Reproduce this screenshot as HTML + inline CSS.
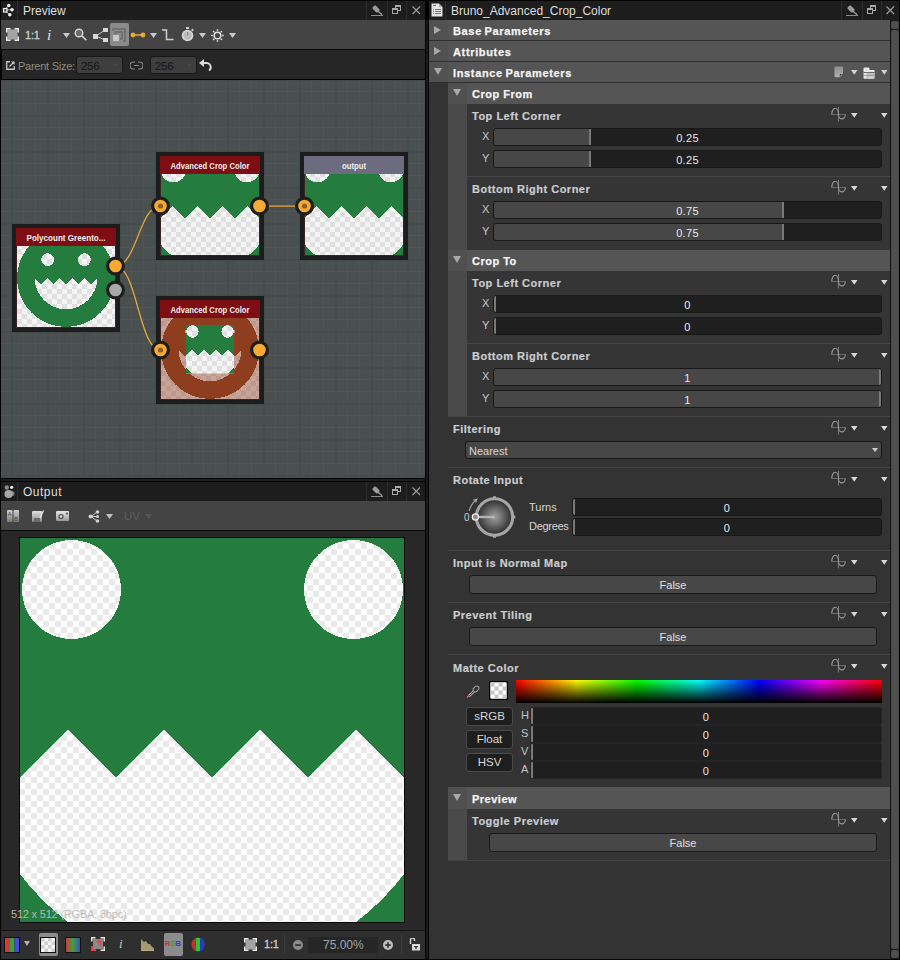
<!DOCTYPE html>
<html><head><meta charset="utf-8"><style>
*{margin:0;padding:0;box-sizing:border-box}
html,body{width:900px;height:960px;overflow:hidden;background:#030303;font-family:"Liberation Sans",sans-serif}
.a{position:absolute}
.t{position:absolute;white-space:nowrap;line-height:1}
.sep{position:absolute;width:1px;background:#2c2c2c}
.bt{position:absolute;white-space:nowrap;line-height:1;font-weight:bold;font-size:11px;letter-spacing:0.5px;color:#f4f4f4;-webkit-text-stroke:0.25px #f4f4f4}
.lt{position:absolute;white-space:nowrap;line-height:1;font-weight:bold;font-size:11px;letter-spacing:0.5px;color:#c9ccd0;-webkit-text-stroke:0.2px #c9ccd0}
.sl{position:absolute;height:17px;border:1px solid #181818;border-radius:3px;background:#1f1f1f;overflow:hidden}
.sl .f{position:absolute;left:0;top:0;bottom:0;background:#474747}
.sl .k{position:absolute;top:0;bottom:0;width:2px;background:#7a7a7a}
.sl .v{position:absolute;left:0;right:0;top:4px;letter-spacing:0.3px;text-align:center;font-size:11px;color:#e8e8e8;line-height:1;white-space:nowrap}
.btn{position:absolute;height:18px;border:1px solid #1a1a1a;border-radius:3px;background:#474747}
.btn .v{position:absolute;left:0;right:0;top:3px;text-align:center;font-size:11px;color:#e0e0e0;line-height:1}
.lbl{position:absolute;font-size:11px;color:#d4d4d4;line-height:1;white-space:nowrap}
</style></head><body>
<div class="a" style="left:1px;top:1px;width:424px;height:19px;background:#1d1d1d"></div>
<div class="sep" style="left:17px;top:1px;height:19px;background:#2e2e2e"></div>
<svg class="a" style="left:0px;top:0px" width="16" height="18" viewBox="0 0 16 18"><path d="M5,9 L9,5.5 M5,10 L12,9.7 M5,11 L10,14.8" stroke="#cfcfcf" stroke-width="0.8"/><rect x="3.5" y="8.5" width="3.5" height="3.5" fill="#555" stroke="#f0f0f0" stroke-width="1.2"/><circle cx="8.8" cy="5.5" r="1.7" fill="#f0f0f0"/><circle cx="12" cy="9.7" r="1.8" fill="#f0f0f0"/><circle cx="9.8" cy="14.8" r="1.8" fill="#f0f0f0"/></svg>
<div class="t" style="left:23px;top:5px;font-size:12px;color:#dedede">Preview</div>
<div class="sep" style="left:366px;top:1px;height:19px"></div>
<div class="sep" style="left:387px;top:1px;height:19px"></div>
<div class="sep" style="left:406px;top:1px;height:19px"></div>
<svg class="a" style="left:371px;top:5px" width="12" height="11" viewBox="0 0 12 11"><g transform="rotate(45 5 4)"><rect x="1.5" y="1.8" width="7" height="4.4" rx="1.2" fill="#9c9c9c"/></g><path d="M5.5,5 L11.2,9.8" stroke="#9c9c9c" stroke-width="1.3"/><rect x="0" y="10" width="12" height="1" fill="#8a8a8a"/></svg><svg class="a" style="left:392px;top:5px" width="9" height="9" viewBox="0 0 9 9"><rect x="3.5" y="0.5" width="5" height="5" fill="none" stroke="#a8a8a8" stroke-width="1"/><rect x="3" y="0" width="6" height="2" fill="#a8a8a8"/><rect x="0.5" y="3.5" width="5" height="5" fill="#1e1e1e" stroke="#a8a8a8" stroke-width="1"/><rect x="0" y="3" width="6" height="2" fill="#a8a8a8"/></svg><svg class="a" style="left:412px;top:6px" width="9" height="9" viewBox="0 0 9 9"><path d="M0.5,0.5 L8,8 M8,0.5 L0.5,8" stroke="#a0a0a0" stroke-width="1.1"/></svg>
<div class="a" style="left:1px;top:20px;width:424px;height:29px;background:#444444"></div>
<div class="a" style="left:1px;top:49px;width:424px;height:1px;background:#0a0a0a"></div>
<div class="a" style="left:2px;top:50px;width:423px;height:29px;background:#262626"></div>
<div class="a" style="left:1px;top:79px;width:424px;height:1px;background:#030303"></div>
<svg class="a" style="left:1px;top:80px" width="424" height="398" viewBox="1 80 424 398">
<defs>
 <pattern id="grid" patternUnits="userSpaceOnUse" x="11" y="7" width="36" height="36">
  <rect x="0" y="0" width="36" height="36" fill="#4a5050"/>
  <rect x="12" y="0" width="1" height="36" fill="#4f5555"/>
  <rect x="24" y="0" width="1" height="36" fill="#4f5555"/>
  <rect x="0" y="12" width="36" height="1" fill="#4f5555"/>
  <rect x="0" y="24" width="36" height="1" fill="#4f5555"/>
  <rect x="0" y="0" width="2" height="36" fill="#464c4c"/>
  <rect x="0" y="0" width="36" height="2" fill="#464c4c"/>
 </pattern>
 <pattern id="chk" patternUnits="userSpaceOnUse" x="1" y="1" width="10" height="10">
  <rect width="10" height="10" fill="#f4f4f4"/>
  <rect width="5" height="5" fill="#e0e0e0"/>
  <rect x="5" y="5" width="5" height="5" fill="#e0e0e0"/>
 </pattern>
 <path id="smiley" d="M6,256 A250,250 0 1 0 506,256 A250,250 0 1 0 6,256 Z M129.33,162.33 A33,33 0 1 0 195.33,162.33 A33,33 0 1 0 129.33,162.33 Z M317.33,162.33 A33,33 0 1 0 383.33,162.33 A33,33 0 1 0 317.33,162.33 Z M96,256 L128,287.4 L160,256 L192,287.4 L224,256 L256,287.4 L288,256 L320,287.4 L352,256 L384,287.4 L416,256 A160,160 0 0 1 96,256 Z" fill-rule="evenodd" shape-rendering="crispEdges"/>
 <clipPath id="c512"><rect width="512" height="512"/></clipPath>
 <clipPath id="c100"><rect width="100" height="100"/></clipPath>
</defs><rect x="1" y="80" width="424" height="398" fill="url(#grid)"/><g fill="none" stroke="#e8a53c" stroke-width="1.25"><path d="M115.5,266 C137,266 139,206 160.5,206"/><path d="M115.5,266 C137,266 139,350 160.5,350"/><path d="M259.5,206 L304.5,206"/></g><g transform="translate(12,224)"><rect x="0" y="0" width="108" height="108" fill="#1c1c1c"/><g transform="translate(4,4)" clip-path="url(#c100)"><rect width="100" height="100" fill="url(#chk)"/><use href="#smiley" transform="scale(0.1953125)" fill="#247d3e"/></g><rect x="4.5" y="4.5" width="99" height="99" fill="none" stroke="#3c2424"/><rect x="4" y="4" width="100" height="18" fill="#7e0e13"/><text x="54" y="16.5" text-anchor="middle" font-family="Liberation Sans" font-weight="bold" font-size="8.3" fill="#f0f0f0" textLength="79" lengthAdjust="spacingAndGlyphs">Polycount Greento...</text></g><g transform="translate(156,152)"><rect x="0" y="0" width="108" height="108" fill="#1c1c1c"/><g transform="translate(4,4)" clip-path="url(#c100)"><rect width="100" height="100" fill="url(#chk)"/><g transform="scale(0.1953125)" clip-path="url(#c512)"><use href="#smiley" transform="scale(2) translate(-128,-128)" fill="#247d3e"/></g></g><rect x="4.5" y="4.5" width="99" height="99" fill="none" stroke="#3c2424"/><rect x="4" y="4" width="100" height="18" fill="#7e0e13"/><text x="54" y="16.5" text-anchor="middle" font-family="Liberation Sans" font-weight="bold" font-size="8.3" fill="#f0f0f0" textLength="79" lengthAdjust="spacingAndGlyphs">Advanced Crop Color</text></g><g transform="translate(300,152)"><rect x="0" y="0" width="108" height="108" fill="#1c1c1c"/><g transform="translate(4,4)" clip-path="url(#c100)"><rect width="100" height="100" fill="url(#chk)"/><g transform="scale(0.1953125)" clip-path="url(#c512)"><use href="#smiley" transform="scale(2) translate(-128,-128)" fill="#247d3e"/></g></g><rect x="4.5" y="4.5" width="99" height="99" fill="none" stroke="#3c2424"/><rect x="4" y="4" width="100" height="18" fill="#6d6b7f"/><text x="54" y="16.5" text-anchor="middle" font-family="Liberation Sans" font-weight="bold" font-size="8.3" fill="#f0f0f0" textLength="24" lengthAdjust="spacingAndGlyphs">output</text></g><g transform="translate(156,296)"><rect x="0" y="0" width="108" height="108" fill="#1c1c1c"/><g transform="translate(4,4)" clip-path="url(#c100)"><rect width="100" height="100" fill="url(#chk)"/><rect width="100" height="100" fill="#8e3d1e" opacity="0.43"/><use href="#smiley" transform="scale(0.1953125)" fill="#8e3d1e"/><g transform="translate(26,25)"><rect width="48" height="48.5" fill="url(#chk)"/><g transform="scale(1,1.01)"><g transform="scale(0.09375)" clip-path="url(#c512)"><use href="#smiley" transform="scale(2) translate(-128,-128)" fill="#247d3e"/></g></g></g></g><rect x="4.5" y="4.5" width="99" height="99" fill="none" stroke="#3c2424"/><rect x="4" y="4" width="100" height="18" fill="#7e0e13"/><text x="54" y="16.5" text-anchor="middle" font-family="Liberation Sans" font-weight="bold" font-size="8.3" fill="#f0f0f0" textLength="79" lengthAdjust="spacingAndGlyphs">Advanced Crop Color</text></g><circle cx="115.5" cy="266" r="7.9" fill="#f6a935" stroke="#1e1e1e" stroke-width="3.2"/><circle cx="115.5" cy="290" r="7.9" fill="#a9a9a9" stroke="#1e1e1e" stroke-width="3.2"/><circle cx="160.5" cy="206" r="7.9" fill="#f6a935" stroke="#1e1e1e" stroke-width="3.2"/><circle cx="160.5" cy="206" r="2.6" fill="#8c6224"/><circle cx="259.5" cy="206" r="7.9" fill="#f6a935" stroke="#1e1e1e" stroke-width="3.2"/><circle cx="304.5" cy="206" r="7.9" fill="#f6a935" stroke="#1e1e1e" stroke-width="3.2"/><circle cx="304.5" cy="206" r="2.6" fill="#8c6224"/><circle cx="160.5" cy="350" r="7.9" fill="#f6a935" stroke="#1e1e1e" stroke-width="3.2"/><circle cx="160.5" cy="350" r="2.6" fill="#8c6224"/><circle cx="259.5" cy="350" r="7.9" fill="#f6a935" stroke="#1e1e1e" stroke-width="3.2"/></svg>
<div class="a" style="left:1px;top:478px;width:424px;height:1px;background:#030303"></div>
<div class="a" style="left:1px;top:479px;width:424px;height:2px;background:#1e1e1e"></div>
<div class="a" style="left:1px;top:481px;width:424px;height:1px;background:#030303"></div>
<div class="a" style="left:1px;top:482px;width:424px;height:19px;background:#1d1d1d"></div>
<div class="sep" style="left:17px;top:482px;height:19px;background:#2e2e2e"></div>
<div class="t" style="left:23px;top:486px;font-size:12px;color:#dedede;letter-spacing:0.5px">Output</div>
<svg class="a" style="left:1px;top:482px" width="16" height="19" viewBox="0 0 16 19"><circle cx="5.8" cy="5.5" r="2.2" fill="#8a8a8a"/><circle cx="10.7" cy="5.3" r="1.6" fill="#e8e8e8"/><circle cx="11" cy="11.5" r="2.6" fill="#7a7a7a"/><circle cx="7.6" cy="12" r="4.1" fill="#a8a8a8"/></svg>
<div class="sep" style="left:366px;top:482px;height:19px"></div>
<div class="sep" style="left:387px;top:482px;height:19px"></div>
<div class="sep" style="left:406px;top:482px;height:19px"></div>
<svg class="a" style="left:371px;top:486px" width="12" height="11" viewBox="0 0 12 11"><g transform="rotate(45 5 4)"><rect x="1.5" y="1.8" width="7" height="4.4" rx="1.2" fill="#9c9c9c"/></g><path d="M5.5,5 L11.2,9.8" stroke="#9c9c9c" stroke-width="1.3"/><rect x="0" y="10" width="12" height="1" fill="#8a8a8a"/></svg><svg class="a" style="left:392px;top:486px" width="9" height="9" viewBox="0 0 9 9"><rect x="3.5" y="0.5" width="5" height="5" fill="none" stroke="#a8a8a8" stroke-width="1"/><rect x="3" y="0" width="6" height="2" fill="#a8a8a8"/><rect x="0.5" y="3.5" width="5" height="5" fill="#1e1e1e" stroke="#a8a8a8" stroke-width="1"/><rect x="0" y="3" width="6" height="2" fill="#a8a8a8"/></svg><svg class="a" style="left:412px;top:487px" width="9" height="9" viewBox="0 0 9 9"><path d="M0.5,0.5 L8,8 M8,0.5 L0.5,8" stroke="#a0a0a0" stroke-width="1.1"/></svg>
<div class="a" style="left:1px;top:501px;width:424px;height:29px;background:#444444"></div>
<div class="a" style="left:1px;top:530px;width:424px;height:1px;background:#0a0a0a"></div>
<div class="a" style="left:1px;top:531px;width:424px;height:399px;background:#282828"></div>
<div class="a" style="left:1px;top:930px;width:424px;height:1px;background:#141414"></div>
<div class="a" style="left:1px;top:931px;width:424px;height:28px;background:#2f2f2f"></div>
<svg class="a" style="left:19px;top:537px" width="386" height="386" viewBox="-1 -1 386 386"><defs><pattern id="chk6" patternUnits="userSpaceOnUse" x="-1" y="-1" width="12" height="12"><rect width="12" height="12" fill="#ffffff"/><rect width="6" height="6" fill="#e9e9e9"/><rect x="6" y="6" width="6" height="6" fill="#e9e9e9"/></pattern></defs><rect x="-1" y="-1" width="386" height="386" fill="#0a0a0a"/><rect width="384" height="384" fill="url(#chk6)"/><g transform="scale(0.75)" clip-path="url(#c512)"><use href="#smiley" transform="scale(2) translate(-128,-128)" fill="#247d3e"/></g></svg>
<div class="t" style="left:11px;top:909px;font-size:11px;color:#aaa;letter-spacing:-0.2px"><span style="color:#b4b6ba">512 x 512</span> <span style="color:#bdbdbd">(RGBA, 8bpc)</span></div>
<div class="a" style="left:429px;top:1px;width:470px;height:19px;background:#1d1d1d"></div>
<div class="sep" style="left:445px;top:1px;height:19px;background:#2e2e2e"></div>
<div class="t" style="left:451px;top:5px;font-size:12px;color:#dedede">Bruno_Advanced_Crop_Color</div>
<div class="sep" style="left:841px;top:1px;height:19px"></div>
<div class="sep" style="left:862px;top:1px;height:19px"></div>
<div class="sep" style="left:881px;top:1px;height:19px"></div>
<svg class="a" style="left:846px;top:5px" width="12" height="11" viewBox="0 0 12 11"><g transform="rotate(45 5 4)"><rect x="1.5" y="1.8" width="7" height="4.4" rx="1.2" fill="#9c9c9c"/></g><path d="M5.5,5 L11.2,9.8" stroke="#9c9c9c" stroke-width="1.3"/><rect x="0" y="10" width="12" height="1" fill="#8a8a8a"/></svg><svg class="a" style="left:867px;top:5px" width="9" height="9" viewBox="0 0 9 9"><rect x="3.5" y="0.5" width="5" height="5" fill="none" stroke="#a8a8a8" stroke-width="1"/><rect x="3" y="0" width="6" height="2" fill="#a8a8a8"/><rect x="0.5" y="3.5" width="5" height="5" fill="#1e1e1e" stroke="#a8a8a8" stroke-width="1"/><rect x="0" y="3" width="6" height="2" fill="#a8a8a8"/></svg><svg class="a" style="left:886px;top:6px" width="9" height="9" viewBox="0 0 9 9"><path d="M0.5,0.5 L8,8 M8,0.5 L0.5,8" stroke="#a0a0a0" stroke-width="1.1"/></svg>
<div class="a" style="left:429px;top:20px;width:461px;height:939px;background:#333333"></div>
<div class="a" style="left:426px;top:20px;width:2px;height:939px;background:#191919"></div>
<div class="a" style="left:890px;top:20px;width:1px;height:939px;background:#141414"></div>
<div class="a" style="left:891px;top:20px;width:8px;height:939px;background:#1c1c1c"></div>
<div class="a" style="left:429px;top:20px;width:461px;height:20px;background:#555555"></div>
<div class="a" style="left:429px;top:20px;width:19px;height:20px;background:#515151"></div>
<div class="a" style="left:429px;top:40px;width:461px;height:1px;background:#2f2f2f"></div>
<svg class="a" style="left:434px;top:26px" width="7" height="8" viewBox="0 0 7 8"><path d="M0,0 L7,4.0 L0,8 Z" fill="#a8a8a8"/></svg>
<div class="bt" style="left:453px;top:26px;letter-spacing:0.65px;word-spacing:-1px">Base Parameters</div>
<div class="a" style="left:429px;top:41px;width:461px;height:20px;background:#555555"></div>
<div class="a" style="left:429px;top:41px;width:19px;height:20px;background:#515151"></div>
<div class="a" style="left:429px;top:61px;width:461px;height:1px;background:#2f2f2f"></div>
<svg class="a" style="left:434px;top:47px" width="7" height="8" viewBox="0 0 7 8"><path d="M0,0 L7,4.0 L0,8 Z" fill="#a8a8a8"/></svg>
<div class="bt" style="left:453px;top:47px;letter-spacing:0.65px;word-spacing:-1px">Attributes</div>
<div class="a" style="left:429px;top:62px;width:461px;height:20px;background:#555555"></div>
<div class="a" style="left:429px;top:62px;width:19px;height:20px;background:#515151"></div>
<div class="a" style="left:429px;top:82px;width:461px;height:1px;background:#2f2f2f"></div>
<svg class="a" style="left:434px;top:68px" width="8" height="7" viewBox="0 0 8 7"><path d="M0,0 L8,0 L4.0,7 Z" fill="#a8a8a8"/></svg>
<div class="bt" style="left:453px;top:68px;letter-spacing:0.65px;word-spacing:-1px">Instance Parameters</div>
<div class="a" style="left:448px;top:83px;width:442px;height:21px;background:#555555"></div>
<div class="a" style="left:448px;top:83px;width:19px;height:21px;background:#505050"></div>
<svg class="a" style="left:453px;top:89px" width="8" height="7" viewBox="0 0 8 7"><path d="M0,0 L8,0 L4.0,7 Z" fill="#a8a8a8"/></svg>
<div class="bt" style="left:472px;top:89px">Crop From</div>
<div class="a" style="left:448px;top:104px;width:19px;height:146px;background:#4a4a4a"></div>
<div class="a" style="left:467px;top:104px;width:423px;height:146px;background:#353535"></div>
<div class="lt" style="left:472px;top:111px">Top Left Corner</div>
<svg class="a" style="left:831px;top:107px" width="15" height="15" viewBox="0 0 15 15"><path d="M7.5,0 V14.5" stroke="#7c7c7c" stroke-width="1"/><path d="M0.5,7.5 H14.5" stroke="#6e6e6e" stroke-width="0.9"/><path d="M0.8,7.5 A3.35,6.3 0 0 1 7.5,7.5 A3.4,4.4 0 0 0 14.3,7.5" fill="none" stroke="#9a9a9a" stroke-width="1.1"/></svg>
<svg class="a" style="left:851px;top:113px" width="6.5" height="4.8" viewBox="0 0 6.5 4.8"><path d="M0,0 L6.5,0 L3.25,4.8 Z" fill="#d8d8d8"/></svg>
<svg class="a" style="left:881px;top:113px" width="6.5" height="4.8" viewBox="0 0 6.5 4.8"><path d="M0,0 L6.5,0 L3.25,4.8 Z" fill="#d8d8d8"/></svg>
<div class="lbl" style="left:482px;top:131px;color:#c8c8c8">X</div>
<div class="sl" style="left:493px;top:128px;width:389px;height:18px"><div class="f" style="width:97px"></div><div class="k" style="left:95px"></div><div class="v">0.25</div></div>
<div class="lbl" style="left:482px;top:153px;color:#c8c8c8">Y</div>
<div class="sl" style="left:493px;top:150px;width:389px;height:18px"><div class="f" style="width:97px"></div><div class="k" style="left:95px"></div><div class="v">0.25</div></div>
<div class="a" style="left:467px;top:176px;width:423px;height:1px;background:#454545"></div>
<div class="lt" style="left:472px;top:184px">Bottom Right Corner</div>
<svg class="a" style="left:831px;top:180px" width="15" height="15" viewBox="0 0 15 15"><path d="M7.5,0 V14.5" stroke="#7c7c7c" stroke-width="1"/><path d="M0.5,7.5 H14.5" stroke="#6e6e6e" stroke-width="0.9"/><path d="M0.8,7.5 A3.35,6.3 0 0 1 7.5,7.5 A3.4,4.4 0 0 0 14.3,7.5" fill="none" stroke="#9a9a9a" stroke-width="1.1"/></svg>
<svg class="a" style="left:851px;top:186px" width="6.5" height="4.8" viewBox="0 0 6.5 4.8"><path d="M0,0 L6.5,0 L3.25,4.8 Z" fill="#d8d8d8"/></svg>
<svg class="a" style="left:881px;top:186px" width="6.5" height="4.8" viewBox="0 0 6.5 4.8"><path d="M0,0 L6.5,0 L3.25,4.8 Z" fill="#d8d8d8"/></svg>
<div class="lbl" style="left:482px;top:204px;color:#c8c8c8">X</div>
<div class="sl" style="left:493px;top:201px;width:389px;height:18px"><div class="f" style="width:290px"></div><div class="k" style="left:288px"></div><div class="v">0.75</div></div>
<div class="lbl" style="left:482px;top:226px;color:#c8c8c8">Y</div>
<div class="sl" style="left:493px;top:223px;width:389px;height:18px"><div class="f" style="width:290px"></div><div class="k" style="left:288px"></div><div class="v">0.75</div></div>
<div class="a" style="left:448px;top:250px;width:442px;height:21px;background:#555555"></div>
<div class="a" style="left:448px;top:250px;width:19px;height:21px;background:#505050"></div>
<svg class="a" style="left:453px;top:256px" width="8" height="7" viewBox="0 0 8 7"><path d="M0,0 L8,0 L4.0,7 Z" fill="#a8a8a8"/></svg>
<div class="bt" style="left:472px;top:256px">Crop To</div>
<div class="a" style="left:448px;top:271px;width:19px;height:145px;background:#4a4a4a"></div>
<div class="a" style="left:467px;top:271px;width:423px;height:145px;background:#353535"></div>
<div class="lt" style="left:472px;top:278px">Top Left Corner</div>
<svg class="a" style="left:831px;top:274px" width="15" height="15" viewBox="0 0 15 15"><path d="M7.5,0 V14.5" stroke="#7c7c7c" stroke-width="1"/><path d="M0.5,7.5 H14.5" stroke="#6e6e6e" stroke-width="0.9"/><path d="M0.8,7.5 A3.35,6.3 0 0 1 7.5,7.5 A3.4,4.4 0 0 0 14.3,7.5" fill="none" stroke="#9a9a9a" stroke-width="1.1"/></svg>
<svg class="a" style="left:851px;top:280px" width="6.5" height="4.8" viewBox="0 0 6.5 4.8"><path d="M0,0 L6.5,0 L3.25,4.8 Z" fill="#d8d8d8"/></svg>
<svg class="a" style="left:881px;top:280px" width="6.5" height="4.8" viewBox="0 0 6.5 4.8"><path d="M0,0 L6.5,0 L3.25,4.8 Z" fill="#d8d8d8"/></svg>
<div class="lbl" style="left:482px;top:298px;color:#c8c8c8">X</div>
<div class="sl" style="left:493px;top:295px;width:389px;height:18px"><div class="k" style="left:0px"></div><div class="v">0</div></div>
<div class="lbl" style="left:482px;top:320px;color:#c8c8c8">Y</div>
<div class="sl" style="left:493px;top:317px;width:389px;height:18px"><div class="k" style="left:0px"></div><div class="v">0</div></div>
<div class="a" style="left:467px;top:343px;width:423px;height:1px;background:#454545"></div>
<div class="lt" style="left:472px;top:351px">Bottom Right Corner</div>
<svg class="a" style="left:831px;top:347px" width="15" height="15" viewBox="0 0 15 15"><path d="M7.5,0 V14.5" stroke="#7c7c7c" stroke-width="1"/><path d="M0.5,7.5 H14.5" stroke="#6e6e6e" stroke-width="0.9"/><path d="M0.8,7.5 A3.35,6.3 0 0 1 7.5,7.5 A3.4,4.4 0 0 0 14.3,7.5" fill="none" stroke="#9a9a9a" stroke-width="1.1"/></svg>
<svg class="a" style="left:851px;top:353px" width="6.5" height="4.8" viewBox="0 0 6.5 4.8"><path d="M0,0 L6.5,0 L3.25,4.8 Z" fill="#d8d8d8"/></svg>
<svg class="a" style="left:881px;top:353px" width="6.5" height="4.8" viewBox="0 0 6.5 4.8"><path d="M0,0 L6.5,0 L3.25,4.8 Z" fill="#d8d8d8"/></svg>
<div class="lbl" style="left:482px;top:371px;color:#c8c8c8">X</div>
<div class="sl" style="left:493px;top:368px;width:389px;height:18px"><div class="f" style="width:387px"></div><div class="k" style="left:385px"></div><div class="v">1</div></div>
<div class="lbl" style="left:482px;top:393px;color:#c8c8c8">Y</div>
<div class="sl" style="left:493px;top:390px;width:389px;height:18px"><div class="f" style="width:387px"></div><div class="k" style="left:385px"></div><div class="v">1</div></div>
<div class="a" style="left:448px;top:416px;width:442px;height:1px;background:#454545"></div>
<div class="lt" style="left:453px;top:424px">Filtering</div>
<svg class="a" style="left:831px;top:420px" width="15" height="15" viewBox="0 0 15 15"><path d="M7.5,0 V14.5" stroke="#7c7c7c" stroke-width="1"/><path d="M0.5,7.5 H14.5" stroke="#6e6e6e" stroke-width="0.9"/><path d="M0.8,7.5 A3.35,6.3 0 0 1 7.5,7.5 A3.4,4.4 0 0 0 14.3,7.5" fill="none" stroke="#9a9a9a" stroke-width="1.1"/></svg>
<svg class="a" style="left:851px;top:426px" width="6.5" height="4.8" viewBox="0 0 6.5 4.8"><path d="M0,0 L6.5,0 L3.25,4.8 Z" fill="#d8d8d8"/></svg>
<svg class="a" style="left:881px;top:426px" width="6.5" height="4.8" viewBox="0 0 6.5 4.8"><path d="M0,0 L6.5,0 L3.25,4.8 Z" fill="#d8d8d8"/></svg>
<div class="a" style="left:465px;top:441px;width:417px;height:18px;border:1px solid #181818;border-radius:3px;background:#474747"></div>
<div class="lbl" style="left:469px;top:446px;color:#dadada">Nearest</div>
<svg class="a" style="left:872px;top:448px" width="6" height="4" viewBox="0 0 6 4"><path d="M0,0 L6,0 L3.0,4 Z" fill="#d0d0d0"/></svg>
<div class="a" style="left:448px;top:467px;width:442px;height:1px;background:#454545"></div>
<div class="lt" style="left:453px;top:475px">Rotate Input</div>
<svg class="a" style="left:831px;top:471px" width="15" height="15" viewBox="0 0 15 15"><path d="M7.5,0 V14.5" stroke="#7c7c7c" stroke-width="1"/><path d="M0.5,7.5 H14.5" stroke="#6e6e6e" stroke-width="0.9"/><path d="M0.8,7.5 A3.35,6.3 0 0 1 7.5,7.5 A3.4,4.4 0 0 0 14.3,7.5" fill="none" stroke="#9a9a9a" stroke-width="1.1"/></svg>
<svg class="a" style="left:851px;top:477px" width="6.5" height="4.8" viewBox="0 0 6.5 4.8"><path d="M0,0 L6.5,0 L3.25,4.8 Z" fill="#d8d8d8"/></svg>
<svg class="a" style="left:881px;top:477px" width="6.5" height="4.8" viewBox="0 0 6.5 4.8"><path d="M0,0 L6.5,0 L3.25,4.8 Z" fill="#d8d8d8"/></svg>
<svg class="a" style="left:466px;top:493px" width="54" height="48" viewBox="0 0 54 48"><defs><radialGradient id="dg" cx="0.5" cy="0.5" r="0.5"><stop offset="0" stop-color="#a2a2a2"/><stop offset="1" stop-color="#323232"/></radialGradient></defs><circle cx="28.5" cy="24" r="17" fill="url(#dg)"/><circle cx="28.5" cy="24" r="18.2" fill="none" stroke="#a6a6a6" stroke-width="3.1"/><rect x="27" y="3.2" width="3" height="3" fill="#a6a6a6"/><rect x="27" y="41.8" width="3" height="3" fill="#a6a6a6"/><rect x="46.3" y="22.5" width="3" height="3" fill="#a6a6a6"/><path d="M9.4,24 H28.5" stroke="#b4b4b4" stroke-width="2.4"/><circle cx="9.4" cy="24" r="3.1" fill="#8c8c8c" stroke="#eeeeee" stroke-width="1.3"/><path d="M3.2,17.8 Q5,11 9.8,7.2" fill="none" stroke="#a0a0a0" stroke-width="1.2"/><path d="M11.8,5.2 L6.8,6.8 L10.2,10 Z" fill="#a0a0a0"/></svg>
<div class="lbl" style="left:464px;top:513px;color:#d0d0d0;font-size:10px">0</div>
<div class="lbl" style="left:529px;top:502px;color:#d6d6d6">Turns</div>
<div class="lbl" style="left:529px;top:521px;color:#d6d6d6;letter-spacing:-0.3px">Degrees</div>
<div class="sl" style="left:572px;top:498px;width:310px;height:18px"><div class="k" style="left:0px"></div><div class="v">0</div></div>
<div class="sl" style="left:572px;top:518px;width:310px;height:18px"><div class="k" style="left:0px"></div><div class="v">0</div></div>
<div class="a" style="left:448px;top:550px;width:442px;height:1px;background:#454545"></div>
<div class="lt" style="left:453px;top:558px">Input is Normal Map</div>
<svg class="a" style="left:831px;top:554px" width="15" height="15" viewBox="0 0 15 15"><path d="M7.5,0 V14.5" stroke="#7c7c7c" stroke-width="1"/><path d="M0.5,7.5 H14.5" stroke="#6e6e6e" stroke-width="0.9"/><path d="M0.8,7.5 A3.35,6.3 0 0 1 7.5,7.5 A3.4,4.4 0 0 0 14.3,7.5" fill="none" stroke="#9a9a9a" stroke-width="1.1"/></svg>
<svg class="a" style="left:851px;top:560px" width="6.5" height="4.8" viewBox="0 0 6.5 4.8"><path d="M0,0 L6.5,0 L3.25,4.8 Z" fill="#d8d8d8"/></svg>
<svg class="a" style="left:881px;top:560px" width="6.5" height="4.8" viewBox="0 0 6.5 4.8"><path d="M0,0 L6.5,0 L3.25,4.8 Z" fill="#d8d8d8"/></svg>
<div class="btn" style="left:469px;top:575px;width:408px;height:19px"><div class="v" style="top:4px">False</div></div>
<div class="a" style="left:448px;top:602px;width:442px;height:1px;background:#454545"></div>
<div class="lt" style="left:453px;top:610px">Prevent Tiling</div>
<svg class="a" style="left:831px;top:606px" width="15" height="15" viewBox="0 0 15 15"><path d="M7.5,0 V14.5" stroke="#7c7c7c" stroke-width="1"/><path d="M0.5,7.5 H14.5" stroke="#6e6e6e" stroke-width="0.9"/><path d="M0.8,7.5 A3.35,6.3 0 0 1 7.5,7.5 A3.4,4.4 0 0 0 14.3,7.5" fill="none" stroke="#9a9a9a" stroke-width="1.1"/></svg>
<svg class="a" style="left:851px;top:612px" width="6.5" height="4.8" viewBox="0 0 6.5 4.8"><path d="M0,0 L6.5,0 L3.25,4.8 Z" fill="#d8d8d8"/></svg>
<svg class="a" style="left:881px;top:612px" width="6.5" height="4.8" viewBox="0 0 6.5 4.8"><path d="M0,0 L6.5,0 L3.25,4.8 Z" fill="#d8d8d8"/></svg>
<div class="btn" style="left:469px;top:627px;width:408px;height:19px"><div class="v" style="top:4px">False</div></div>
<div class="a" style="left:448px;top:654px;width:442px;height:1px;background:#454545"></div>
<div class="lt" style="left:453px;top:663px">Matte Color</div>
<svg class="a" style="left:831px;top:658px" width="15" height="15" viewBox="0 0 15 15"><path d="M7.5,0 V14.5" stroke="#7c7c7c" stroke-width="1"/><path d="M0.5,7.5 H14.5" stroke="#6e6e6e" stroke-width="0.9"/><path d="M0.8,7.5 A3.35,6.3 0 0 1 7.5,7.5 A3.4,4.4 0 0 0 14.3,7.5" fill="none" stroke="#9a9a9a" stroke-width="1.1"/></svg>
<svg class="a" style="left:851px;top:664px" width="6.5" height="4.8" viewBox="0 0 6.5 4.8"><path d="M0,0 L6.5,0 L3.25,4.8 Z" fill="#d8d8d8"/></svg>
<svg class="a" style="left:881px;top:664px" width="6.5" height="4.8" viewBox="0 0 6.5 4.8"><path d="M0,0 L6.5,0 L3.25,4.8 Z" fill="#d8d8d8"/></svg>
<svg class="a" style="left:466px;top:685px" width="14" height="13" viewBox="0 0 14 13"><ellipse cx="10" cy="4" rx="3.3" ry="2.3" transform="rotate(-45 10 4)" fill="none" stroke="#a8a8a8" stroke-width="1"/><path d="M8,6.2 L2.8,11.2" stroke="#a0a0a0" stroke-width="2.6"/><path d="M7.6,6.6 L3.2,10.8" stroke="#3a3a3a" stroke-width="0.9"/><path d="M1,12.5 L3,10.5" stroke="#d86060" stroke-width="1.6"/></svg>
<svg class="a" style="left:489px;top:681px" width="19" height="19" viewBox="0 0 19 19"><rect x="0.5" y="0.5" width="18" height="18" rx="1.5" fill="#ffffff" stroke="#050505" stroke-width="1.6"/><path d="M1.5,1.5h4v4h-4z M9.5,1.5h4v4h-4z M5.5,5.5h4v4h-4z M13.5,5.5h4v4h-4z M1.5,9.5h4v4h-4z M9.5,9.5h4v4h-4z M5.5,13.5h4v4h-4z M13.5,13.5h4v4h-4z" fill="#c6c6c6"/></svg>
<div class="a" style="left:516px;top:680px;width:366px;height:23px;background:linear-gradient(to bottom, rgba(0,0,0,0) 0%, rgba(0,0,0,1) 100%),linear-gradient(to right,#ff0000 0%,#ffff00 16.67%,#00ff00 33.33%,#00ffff 50%,#0000ff 66.67%,#ff00ff 83.33%,#ff0000 100%)"></div>
<div class="a" style="left:466px;top:707px;width:47px;height:19px;border:1px solid #4a4a4a;border-radius:3px;background:#1e1e1e"></div>
<div class="lbl" style="left:466px;top:711px;width:47px;text-align:center;color:#d8d8d8;font-size:11.5px">sRGB</div>
<div class="a" style="left:466px;top:730px;width:47px;height:19px;border:1px solid #4a4a4a;border-radius:3px;background:#1e1e1e"></div>
<div class="lbl" style="left:466px;top:734px;width:47px;text-align:center;color:#d8d8d8;font-size:11.5px">Float</div>
<div class="a" style="left:466px;top:753px;width:47px;height:19px;border:1px solid #4a4a4a;border-radius:3px;background:#1e1e1e"></div>
<div class="lbl" style="left:466px;top:757px;width:47px;text-align:center;color:#d8d8d8;font-size:11.5px">HSV</div>
<div class="lbl" style="left:521px;top:710px;color:#c4c4c4">H</div>
<div class="sl" style="left:530px;top:707px;width:352px;height:18px;border-radius:2px;border-color:#242424"><div class="k" style="left:0px;width:2px"></div><div class="v" style="top:4px">0</div></div>
<div class="lbl" style="left:521px;top:728px;color:#c4c4c4">S</div>
<div class="sl" style="left:530px;top:725px;width:352px;height:18px;border-radius:2px;border-color:#242424"><div class="k" style="left:0px;width:2px"></div><div class="v" style="top:4px">0</div></div>
<div class="lbl" style="left:521px;top:746px;color:#c4c4c4">V</div>
<div class="sl" style="left:530px;top:743px;width:352px;height:18px;border-radius:2px;border-color:#242424"><div class="k" style="left:0px;width:2px"></div><div class="v" style="top:4px">0</div></div>
<div class="lbl" style="left:521px;top:764px;color:#c4c4c4">A</div>
<div class="sl" style="left:530px;top:761px;width:352px;height:18px;border-radius:2px;border-color:#242424"><div class="k" style="left:0px;width:2px"></div><div class="v" style="top:4px">0</div></div>
<div class="a" style="left:448px;top:787px;width:442px;height:22px;background:#555555"></div>
<div class="a" style="left:448px;top:787px;width:19px;height:22px;background:#505050"></div>
<svg class="a" style="left:453px;top:794px" width="8" height="7" viewBox="0 0 8 7"><path d="M0,0 L8,0 L4.0,7 Z" fill="#a8a8a8"/></svg>
<div class="bt" style="left:472px;top:794px">Preview</div>
<div class="a" style="left:448px;top:809px;width:19px;height:51px;background:#4a4a4a"></div>
<div class="a" style="left:467px;top:809px;width:423px;height:51px;background:#353535"></div>
<div class="lt" style="left:472px;top:816px">Toggle Preview</div>
<svg class="a" style="left:831px;top:812px" width="15" height="15" viewBox="0 0 15 15"><path d="M7.5,0 V14.5" stroke="#7c7c7c" stroke-width="1"/><path d="M0.5,7.5 H14.5" stroke="#6e6e6e" stroke-width="0.9"/><path d="M0.8,7.5 A3.35,6.3 0 0 1 7.5,7.5 A3.4,4.4 0 0 0 14.3,7.5" fill="none" stroke="#9a9a9a" stroke-width="1.1"/></svg>
<svg class="a" style="left:851px;top:818px" width="6.5" height="4.8" viewBox="0 0 6.5 4.8"><path d="M0,0 L6.5,0 L3.25,4.8 Z" fill="#d8d8d8"/></svg>
<svg class="a" style="left:881px;top:818px" width="6.5" height="4.8" viewBox="0 0 6.5 4.8"><path d="M0,0 L6.5,0 L3.25,4.8 Z" fill="#d8d8d8"/></svg>
<div class="btn" style="left:489px;top:833px;width:388px;height:19px"><div class="v" style="top:4px">False</div></div>
<div class="a" style="left:448px;top:860px;width:442px;height:1px;background:#454545"></div>
<svg class="a" style="left:6px;top:28px" width="13" height="13" viewBox="0 0 13 13"><rect x="1.5" y="1.5" width="10" height="10" fill="#a3a3a3"/><path d="M0.75,4.5 V0.75 H4.5 M8.5,0.75 H12.25 V4.5 M12.25,8.5 V12.25 H8.5 M4.5,12.25 H0.75 V8.5" fill="none" stroke="#ececec" stroke-width="1.5"/></svg>
<div class="t" style="left:25px;top:30px;font-size:11px;color:#cfcfcf;letter-spacing:-0.2px;-webkit-text-stroke:0.3px #cfcfcf">1:1</div>
<div class="t" style="left:47px;top:28px;font-size:15px;color:#e0e0e0;font-family:'Liberation Serif';font-style:italic">i</div>
<svg class="a" style="left:63px;top:33px" width="7" height="5" viewBox="0 0 7 5"><path d="M0,0 L7,0 L3.5,5 Z" fill="#c8c8c8"/></svg>
<svg class="a" style="left:74px;top:28px" width="13" height="13" viewBox="0 0 13 13"><circle cx="5" cy="5" r="3.8" fill="#6a6a6a" stroke="#d8d8d8" stroke-width="1.4"/><path d="M7.8,7.8 L12.3,12.3" stroke="#d8d8d8" stroke-width="1.6"/></svg>
<svg class="a" style="left:93px;top:28px" width="15" height="14" viewBox="0 0 15 14"><path d="M3,8 L12,2 M3,8 L12,12" stroke="#d0d0d0" stroke-width="1"/><rect x="0" y="6" width="5" height="5" fill="#d8d8d8"/><rect x="10" y="0" width="5" height="4" fill="#d8d8d8"/><rect x="10" y="10" width="5" height="4" fill="#d8d8d8"/></svg>
<div class="a" style="left:110px;top:23px;width:19px;height:23px;background:#8a8a8a;border-radius:2px"></div>
<svg class="a" style="left:112px;top:28px" width="15" height="14" viewBox="0 0 15 14"><path d="M1,3 V1 H13 V13 H11" fill="none" stroke="#6a6a6a" stroke-width="1.5"/><path d="M3.5,6 V4 H10 V11 H8" fill="none" stroke="#6a6a6a" stroke-width="1.5"/><rect x="1" y="7" width="6" height="6" fill="#c8c8c8"/></svg>
<svg class="a" style="left:130px;top:31px" width="16" height="8" viewBox="0 0 16 8"><path d="M3,4 H13" stroke="#f0a834" stroke-width="1.5"/><circle cx="3" cy="4" r="2.4" fill="#f0a834"/><circle cx="13" cy="4" r="2.4" fill="#f0a834"/></svg>
<svg class="a" style="left:150px;top:33px" width="7" height="5" viewBox="0 0 7 5"><path d="M0,0 L7,0 L3.5,5 Z" fill="#c8c8c8"/></svg>
<svg class="a" style="left:162px;top:29px" width="12" height="12" viewBox="0 0 12 12"><path d="M0,1 H4.5 V10.5 H11.5" fill="none" stroke="#cfcfcf" stroke-width="1.5"/></svg>
<svg class="a" style="left:181px;top:27px" width="13" height="15" viewBox="0 0 13 15"><rect x="5" y="0" width="3" height="2" fill="#d0d0d0"/><circle cx="6.5" cy="8.5" r="5.8" fill="#d8d8d8"/><circle cx="6.5" cy="8.5" r="4.2" fill="#bdbdbd"/><path d="M6.5,8.5 V5" stroke="#888" stroke-width="1"/><rect x="10.5" y="2" width="2" height="2" fill="#c8c8c8" transform="rotate(45 11.5 3)"/></svg>
<svg class="a" style="left:199px;top:33px" width="7" height="5" viewBox="0 0 7 5"><path d="M0,0 L7,0 L3.5,5 Z" fill="#c8c8c8"/></svg>
<svg class="a" style="left:211px;top:29px" width="13" height="13" viewBox="0 0 13 13"><circle cx="6.5" cy="6.5" r="3.3" fill="none" stroke="#e0e0e0" stroke-width="1.5"/><path d="M11.20,6.50 L12.80,6.50" stroke="#e0e0e0" stroke-width="1.5"/><path d="M9.82,9.82 L10.95,10.95" stroke="#e0e0e0" stroke-width="1.5"/><path d="M6.50,11.20 L6.50,12.80" stroke="#e0e0e0" stroke-width="1.5"/><path d="M3.18,9.82 L2.05,10.95" stroke="#e0e0e0" stroke-width="1.5"/><path d="M1.80,6.50 L0.20,6.50" stroke="#e0e0e0" stroke-width="1.5"/><path d="M3.18,3.18 L2.05,2.05" stroke="#e0e0e0" stroke-width="1.5"/><path d="M6.50,1.80 L6.50,0.20" stroke="#e0e0e0" stroke-width="1.5"/><path d="M9.82,3.18 L10.95,2.05" stroke="#e0e0e0" stroke-width="1.5"/></svg>
<svg class="a" style="left:229px;top:33px" width="7" height="5" viewBox="0 0 7 5"><path d="M0,0 L7,0 L3.5,5 Z" fill="#c8c8c8"/></svg>
<svg class="a" style="left:6px;top:61px" width="9" height="9" viewBox="0 0 9 9"><path d="M4,0.75 H0.75 V8.25 H8.25 V5" fill="none" stroke="#c8c8c8" stroke-width="1.3"/><path d="M3.5,5.5 L8,1" stroke="#c8c8c8" stroke-width="1.2"/><path d="M5,0.5 H8.5 V4 Z" fill="#c8c8c8"/></svg>
<div class="t" style="left:18px;top:61px;font-size:11px;color:#8f8b7d;letter-spacing:-0.25px">Parent Size:</div>
<div class="a" style="left:76px;top:56px;width:47px;height:18px;background:#3e3e3e;border:1px solid #181818;border-radius:3px"></div>
<div class="t" style="left:81px;top:61px;font-size:11.5px;color:#161616;letter-spacing:-0.3px">256</div>
<svg class="a" style="left:113px;top:64px" width="5" height="3" viewBox="0 0 5 3"><path d="M0,0 L5,0 L2.5,3 Z" fill="#484848"/></svg>
<div class="a" style="left:150px;top:56px;width:47px;height:18px;background:#3e3e3e;border:1px solid #181818;border-radius:3px"></div>
<div class="t" style="left:155px;top:61px;font-size:11.5px;color:#161616;letter-spacing:-0.3px">256</div>
<svg class="a" style="left:187px;top:64px" width="5" height="3" viewBox="0 0 5 3"><path d="M0,0 L5,0 L2.5,3 Z" fill="#484848"/></svg>
<svg class="a" style="left:130px;top:61px" width="13" height="9" viewBox="0 0 13 9"><path d="M5,1 H3.5 A3,3 0 0 0 3.5,8 H5 M8,1 H9.5 A3,3 0 0 1 9.5,8 H8 M4,4.5 H9" fill="none" stroke="#8a8a8a" stroke-width="1.2"/></svg>
<svg class="a" style="left:199px;top:59px" width="14" height="12" viewBox="0 0 14 12"><path d="M4,4 H7.5 A4.2,4.2 0 0 1 11.7,8.2 A3.5,3.5 0 0 1 10,11.5" fill="none" stroke="#dcdcdc" stroke-width="2"/><path d="M0,4 L5,0 V8 Z" fill="#dcdcdc"/></svg>
<svg class="a" style="left:7px;top:510px" width="12" height="12" viewBox="0 0 12 12"><defs><linearGradient id="abg" x1="0" y1="0" x2="0" y2="1"><stop offset="0" stop-color="#d0d0d0"/><stop offset="1" stop-color="#7a7a7a"/></linearGradient></defs><rect x="0" y="0" width="5.5" height="12" rx="1" fill="url(#abg)"/><rect x="6.5" y="0" width="5.5" height="12" rx="1" fill="url(#abg)"/><text x="0.8" y="6" font-size="5.5" font-family="Liberation Sans" fill="#444">A</text><text x="7.2" y="11" font-size="5.5" font-family="Liberation Sans" fill="#444">B</text></svg>
<svg class="a" style="left:32px;top:510px" width="12" height="12" viewBox="0 0 12 12"><defs><linearGradient id="svg1" x1="0" y1="0" x2="0" y2="1"><stop offset="0" stop-color="#e0e0e0"/><stop offset="1" stop-color="#8a8a8a"/></linearGradient></defs><rect x="0" y="1" width="10" height="11" rx="1" fill="url(#svg1)"/><rect x="2" y="8" width="6" height="4" fill="#6a6a6a"/><path d="M8,8 L11.5,0.5" stroke="#e8e8e8" stroke-width="1.3"/></svg>
<svg class="a" style="left:56px;top:510px" width="13" height="11" viewBox="0 0 13 11"><defs><linearGradient id="cam" x1="0" y1="0" x2="0" y2="1"><stop offset="0" stop-color="#e8e8e8"/><stop offset="1" stop-color="#9a9a9a"/></linearGradient></defs><rect x="0" y="1" width="13" height="10" rx="1" fill="url(#cam)"/><circle cx="5" cy="6.5" r="2.6" fill="#555"/><circle cx="5" cy="6.5" r="1.3" fill="#ddd"/><rect x="10" y="2.5" width="2" height="2" fill="#666"/></svg>
<svg class="a" style="left:88px;top:510px" width="12" height="13" viewBox="0 0 12 13"><path d="M3,6.5 L9,2 M3,6.5 L9,11 M3,6.5 H9" stroke="#c8c8c8" stroke-width="1"/><circle cx="2.5" cy="6.5" r="2" fill="#d0d0d0"/><circle cx="9.5" cy="2" r="1.8" fill="#d0d0d0"/><circle cx="9.5" cy="11" r="1.8" fill="#d0d0d0"/><circle cx="9.5" cy="6.5" r="1.5" fill="#d0d0d0"/></svg>
<svg class="a" style="left:106px;top:514px" width="7" height="5" viewBox="0 0 7 5"><path d="M0,0 L7,0 L3.5,5 Z" fill="#c0c0c0"/></svg>
<div class="t" style="left:124px;top:511px;font-size:11.5px;color:#5c5c5c">UV</div>
<svg class="a" style="left:145px;top:514px" width="7" height="5" viewBox="0 0 7 5"><path d="M0,0 L7,0 L3.5,5 Z" fill="#555555"/></svg>
<svg class="a" style="left:4px;top:937px" width="16" height="16" viewBox="0 0 16 16"><rect x="0" y="0" width="16" height="16" fill="#111"/><rect x="1" y="1" width="5" height="14" fill="#d23a3a"/><rect x="6" y="1" width="4.5" height="14" fill="#3aa33a"/><rect x="10.5" y="1" width="4.5" height="14" fill="#4a4ad8"/></svg>
<svg class="a" style="left:24px;top:941px" width="6" height="5" viewBox="0 0 6 5"><path d="M0,0 L6,0 L3.0,5 Z" fill="#b0b0b0"/></svg>
<div class="a" style="left:39px;top:933px;width:19px;height:23px;background:#8c8c8c;border-radius:2px"></div>
<svg class="a" style="left:40px;top:937px" width="16" height="16" viewBox="0 0 16 16"><rect x="0" y="0" width="16" height="16" fill="#111"/><rect x="1" y="1" width="14" height="14" fill="#f4f4f4"/><path d="M1,1h3.5v3.5h-3.5z M8,1h3.5v3.5h-3.5z M4.5,4.5h3.5v3.5h-3.5z M11.5,4.5h3.5v3.5h-3.5z M1,8h3.5v3.5h-3.5z M8,8h3.5v3.5h-3.5z M4.5,11.5h3.5v3.5h-3.5z M11.5,11.5h3.5v3.5h-3.5z" fill="#cfcfcf"/></svg>
<svg class="a" style="left:65px;top:937px" width="16" height="16" viewBox="0 0 16 16"><defs><linearGradient id="gr1" x1="0" y1="0" x2="1" y2="0"><stop offset="0" stop-color="#c04040"/><stop offset="0.5" stop-color="#40a040"/><stop offset="1" stop-color="#4050c0"/></linearGradient></defs><rect x="0" y="0" width="16" height="16" fill="#111"/><rect x="1" y="1" width="14" height="14" fill="url(#gr1)"/></svg>
<svg class="a" style="left:91px;top:937px" width="14" height="14" viewBox="0 0 14 14"><rect x="2" y="2" width="10" height="10" fill="#8a8a8a"/><path d="M0.75,4.5 V0.75 H4.5 M9.5,0.75 H13.25 V4.5 M13.25,9.5 V13.25 H9.5 M4.5,13.25 H0.75 V9.5" fill="none" stroke="#e8e8e8" stroke-width="1.5"/><path d="M1,9.5 V13 H4.5" fill="none" stroke="#e84040" stroke-width="2"/><path d="M5.5,4.5 H9.5 V8.5" fill="none" stroke="#e84040" stroke-width="2"/></svg>
<div class="t" style="left:119px;top:937px;font-size:13px;color:#c8c8c8;font-family:'Liberation Serif';font-style:italic">i</div>
<svg class="a" style="left:141px;top:938px" width="13" height="13" viewBox="0 0 13 13"><path d="M0,13 V1 L3,4 L5,3 L7,6 L9,6 L11,9 L13,10 V13 Z" fill="#a89a70"/><path d="M0,13 H13" stroke="#c8c0a0" stroke-width="1"/></svg>
<div class="a" style="left:164px;top:933px;width:19px;height:23px;background:#8c8c8c;border-radius:2px"></div>
<div class="t" style="left:165px;top:940px;font-size:7.5px;font-weight:bold;letter-spacing:-0.4px"><span style="color:#d03030">R</span><span style="color:#30a030">G</span><span style="color:#3040d0">B</span></div>
<svg class="a" style="left:191px;top:937px" width="14" height="15" viewBox="0 0 14 15"><defs><radialGradient id="rg1"><stop offset="0.6" stop-color="#000" stop-opacity="0"/><stop offset="1" stop-color="#000" stop-opacity="0"/></radialGradient></defs><ellipse cx="7" cy="7.5" rx="6.5" ry="7" fill="#c03030"/><ellipse cx="9" cy="7.5" rx="4.5" ry="7" fill="#2040c0"/><rect x="5" y="1" width="4" height="13" fill="#30c030"/></svg>
<svg class="a" style="left:244px;top:938px" width="13" height="13" viewBox="0 0 13 13"><rect x="1.5" y="1.5" width="10" height="10" fill="#a3a3a3"/><path d="M0.75,4.5 V0.75 H4.5 M8.5,0.75 H12.25 V4.5 M12.25,8.5 V12.25 H8.5 M4.5,12.25 H0.75 V8.5" fill="none" stroke="#ececec" stroke-width="1.5"/></svg>
<div class="t" style="left:264px;top:939px;font-size:11px;color:#cfcfcf;letter-spacing:-0.2px;-webkit-text-stroke:0.3px #cfcfcf">1:1</div>
<div class="a" style="left:284px;top:935px;width:1px;height:19px;background:#3c3c3c"></div>
<svg class="a" style="left:293px;top:940px" width="10" height="10" viewBox="0 0 10 10"><circle cx="5" cy="5" r="5" fill="#8a8a8a"/><rect x="2.2" y="4.3" width="5.6" height="1.6" fill="#2a2a2a"/></svg>
<div class="a" style="left:308px;top:937px;width:70px;height:16px;background:#262626"></div>
<div class="t" style="left:323px;top:939px;font-size:12px;color:#9ea4ac">75.00%</div>
<svg class="a" style="left:383px;top:940px" width="10" height="10" viewBox="0 0 10 10"><circle cx="5" cy="5" r="5" fill="#bdbdbd"/><rect x="2.2" y="4.3" width="5.6" height="1.5" fill="#2a2a2a"/><rect x="4.25" y="2.2" width="1.5" height="5.6" fill="#2a2a2a"/></svg>
<div class="a" style="left:401px;top:935px;width:1px;height:19px;background:#3c3c3c"></div>
<svg class="a" style="left:409px;top:938px" width="12" height="13" viewBox="0 0 12 13"><path d="M1.5,6 V2 A2,2 0 0 1 5.5,2 V3" fill="none" stroke="#d8d8d8" stroke-width="1.4"/><rect x="3" y="6" width="8" height="6.5" fill="#d8d8d8"/><rect x="6.2" y="8" width="1.6" height="3" fill="#444"/><rect x="5" y="8" width="4" height="1.2" fill="#444"/></svg>
<svg class="a" style="left:431px;top:3px" width="12" height="14" viewBox="0 0 12 14"><path d="M0.5,0.5 H8 L11.5,4 V13.5 H0.5 Z" fill="#e4e4e4"/><path d="M8,0.5 V4 H11.5 Z" fill="#aaa"/><rect x="2" y="2" width="3" height="1" fill="#777"/><g fill="#777"><rect x="2" y="6" width="1" height="1"/><rect x="2" y="8" width="1" height="1"/><rect x="2" y="10" width="1" height="1"/><rect x="4" y="6" width="6" height="1"/><rect x="4" y="8" width="6" height="1"/><rect x="4" y="10" width="6" height="1"/></g></svg>
<svg class="a" style="left:834px;top:66px" width="10" height="12" viewBox="0 0 10 12"><defs><linearGradient id="pg1" x1="0" y1="0" x2="0" y2="1"><stop offset="0" stop-color="#8e8e8e"/><stop offset="1" stop-color="#b0b0b0"/></linearGradient></defs><path d="M1.5,0.5 H8 A1,1 0 0 1 9,1.5 V8 L5.8,11.3 H1.5 A1,1 0 0 1 0.5,10.3 V1.5 A1,1 0 0 1 1.5,0.5 Z" fill="url(#pg1)"/><path d="M9,8 L5.8,11.3 V8.8 A0.8,0.8 0 0 1 6.6,8 Z" fill="#3a3a3a"/><path d="M8,8.6 L6.4,10.2" stroke="#dcdcdc" stroke-width="0.8"/></svg>
<svg class="a" style="left:851px;top:70px" width="6.5" height="4.8" viewBox="0 0 6.5 4.8"><path d="M0,0 L6.5,0 L3.25,4.8 Z" fill="#d0d0d0"/></svg>
<svg class="a" style="left:863px;top:67px" width="12" height="12" viewBox="0 0 12 12"><path d="M0.5,1.2 A0.8,0.8 0 0 1 1.3,0.4 H6 L6.8,3 H11 A0.8,0.8 0 0 1 11.6,3.8 V11 A0.8,0.8 0 0 1 10.8,11.7 H1.3 A0.8,0.8 0 0 1 0.5,11 Z" fill="#e6e6e6"/><rect x="0.5" y="5" width="11.1" height="0.9" fill="#5a5a5a"/><rect x="0.5" y="8" width="11.1" height="0.8" fill="#8a8a8a"/><rect x="3.8" y="5.5" width="0.8" height="6" fill="#9a9a9a"/><rect x="5" y="6.4" width="6" height="1.2" fill="#a8a8a8"/><rect x="5" y="9.3" width="6" height="1.2" fill="#bdbdbd"/></svg>
<svg class="a" style="left:881px;top:70px" width="6.5" height="4.8" viewBox="0 0 6.5 4.8"><path d="M0,0 L6.5,0 L3.25,4.8 Z" fill="#d0d0d0"/></svg>
<div class="a" style="left:891px;top:21px;width:8px;height:8px;background:#4f4f4f;border-radius:2.5px;box-shadow:inset 0 0 0 0.5px #444"></div>
<div class="a" style="left:891px;top:30px;width:8px;height:919px;background:#4f4f4f;border-radius:2.5px;box-shadow:inset 0 0 0 0.5px #444"></div>
<div class="a" style="left:891px;top:950px;width:8px;height:8px;background:#4f4f4f;border-radius:2.5px;box-shadow:inset 0 0 0 0.5px #444"></div>
</body></html>
